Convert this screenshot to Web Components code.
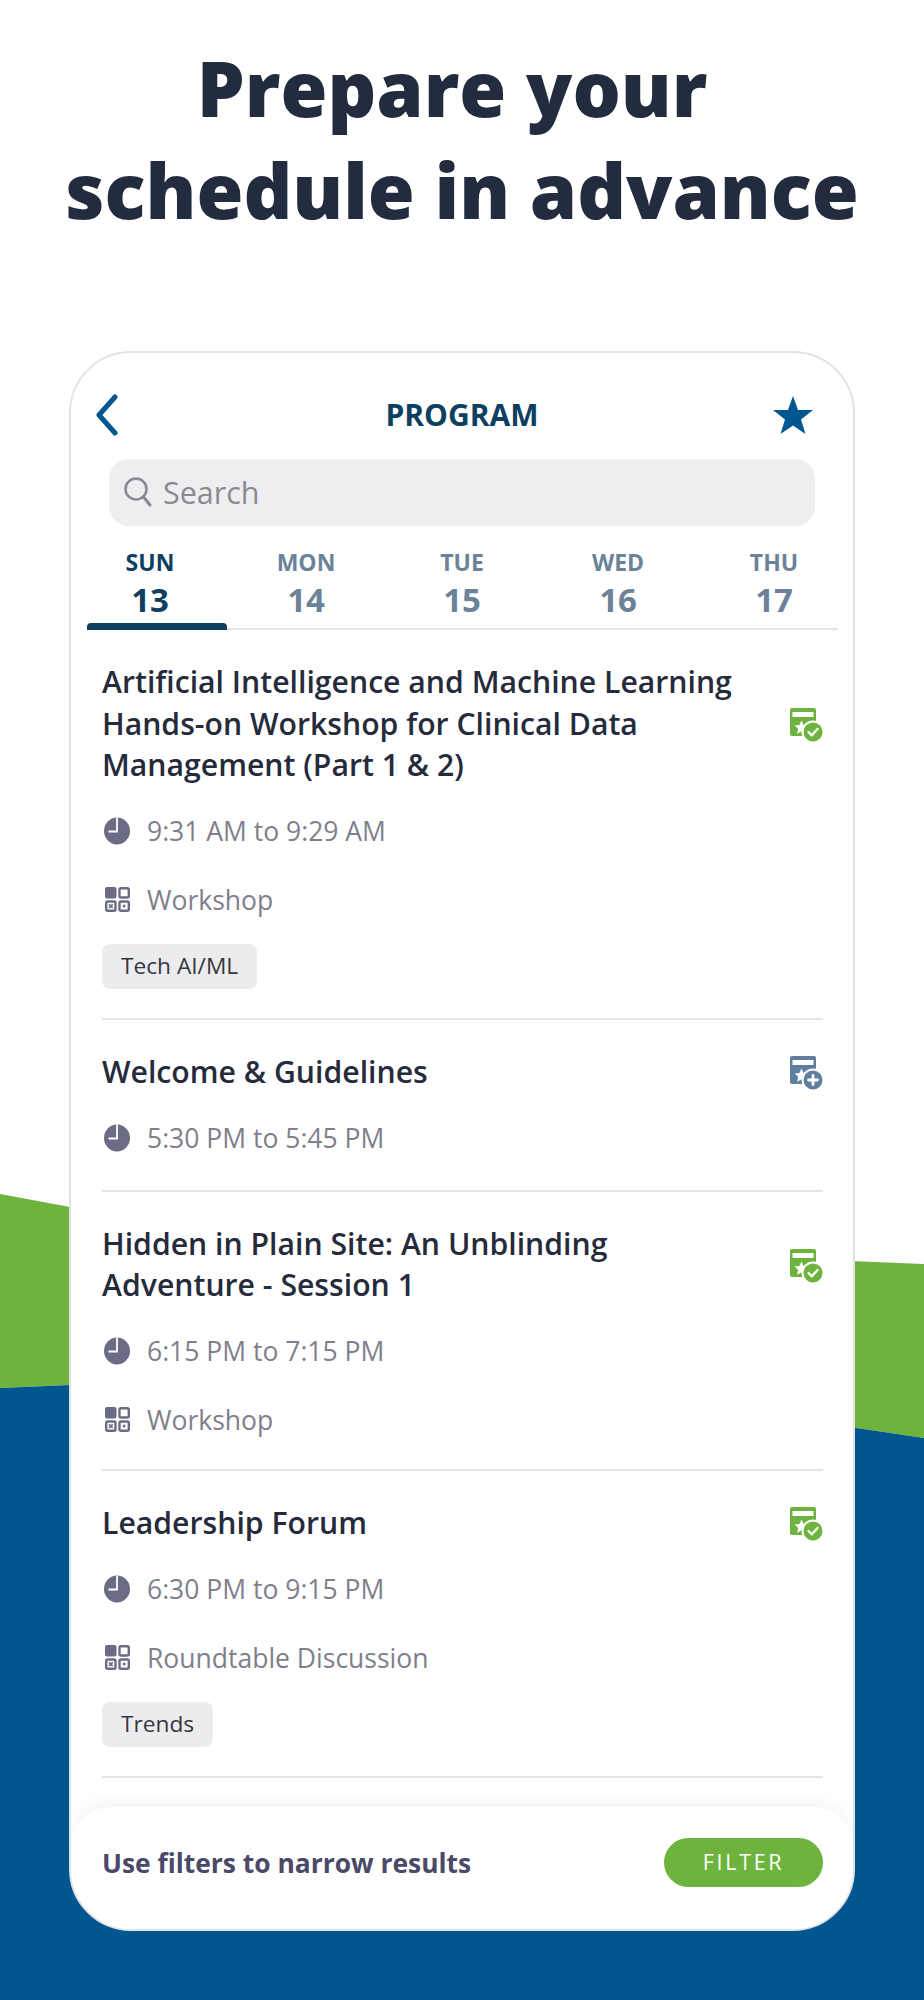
<!DOCTYPE html>
<html>
<head>
<meta charset="utf-8">
<title>Program</title>
<style>
  html, body { margin: 0; padding: 0; background: #fff; }
  body { font-family: "Open Sans", "Noto Sans", sans-serif; }
</style>
</head>
<body>
<promo-page>
  <span slot="headline">Prepare your&nbsp;<br>schedule in advance</span>
  <program-card>
    <program-nav>PROGRAM</program-nav>
    <search-box>Search</search-box>
    <day-tabs></day-tabs>
    <session-item time="9:31 AM to 9:29 AM" kind="Workshop" tag="Tech AI/ML" state="added">Artificial Intelligence and Machine Learning Hands-on Workshop for Clinical Data Management (Part 1 &amp; 2)</session-item>
    <session-item time="5:30 PM to 5:45 PM" state="open">Welcome &amp; Guidelines</session-item>
    <session-item time="6:15 PM to 7:15 PM" kind="Workshop" state="added">Hidden in Plain Site: An Unblinding Adventure - Session 1</session-item>
    <session-item time="6:30 PM to 9:15 PM" kind="Roundtable Discussion" tag="Trends" state="added">Leadership Forum</session-item>
    <filter-bar slot="footer">Use filters to narrow results</filter-bar>
  </program-card>
</promo-page>

<script>
  // shared little helper, every element does the same thing with its shadow root
  function shadow(el, html) {
    el.attachShadow({ mode: "open" });
    el.shadowRoot.innerHTML = html;
  }

  class PromoPage extends HTMLElement {
    constructor() {
      super();
      shadow(this, `
      <style>
        :host { display: block; position: relative; width: 924px; height: 2000px; overflow: hidden; background: #fff; }
        .backdrop { position: absolute; left: 0; top: 0; }
        h1 {
          position: relative; margin: 0; height: 351px; box-sizing: border-box; padding-top: 37px;
          text-align: center; font: 800 76px/102px "Open Sans", sans-serif; color: #232c3f;
        }
        .device { position: relative; margin: 0 69px; }
      </style>
      <svg class="backdrop" width="924" height="2000" viewBox="0 0 924 2000">
        <path fill="#6fb33f" d="M0 1194 L70 1207 V1385 L0 1388Z"/>
        <path fill="#6fb33f" d="M850 1261 L924 1264 V1438 L850 1427Z"/>
        <path fill="#00568f" d="M0 1388 L70 1385 H850 V1427 L924 1438 V2000 H0Z"/>
      </svg>
      <h1><slot name="headline"></slot></h1>
      <div class="device"><slot></slot></div>`);
    }
  }

  class ProgramCard extends HTMLElement {
    constructor() {
      super();
      shadow(this, `
      <style>
        :host {
          display: flex; flex-direction: column; box-sizing: border-box; width: 786px; height: 1580px;
          background: #fff; border: 2px solid #e3e3e5; border-radius: 62px; overflow: hidden;
        }
        .list { flex: 1; min-height: 0; overflow: hidden; }
      </style>
      <div class="list"><slot></slot></div>
      <slot name="footer"></slot>`);
    }
  }

  class ProgramNav extends HTMLElement {
    constructor() {
      super();
      shadow(this, `
      <style>
        :host {
          display: grid; grid-template-columns: 1fr auto 1fr; align-items: center; box-sizing: border-box;
          height: 78px; margin-top: 23px; padding: 0 23px;
        }
        .title { font: 700 30px/38px "Open Sans", sans-serif; color: #0e3f61; }
        .star { justify-self: end; margin-right: 17px; }
      </style>
      <svg width="26" height="42" viewBox="0 0 26 42">
        <path d="M21 3 L5 21 L21 39" fill="none" stroke="#00568f" stroke-width="5" stroke-linecap="round" stroke-linejoin="round"/>
      </svg>
      <span class="title"><slot></slot></span>
      <svg class="star" width="40" height="38" viewBox="0 0 40 38">
        <path fill="#00568f" d="M20 0 L25 14 L40 14 L28 23.5 L32.5 38 L20 29.5 L7.5 38 L12 23.5 L0 14 L15 14Z"/>
      </svg>`);
    }
  }

  class SearchBox extends HTMLElement {
    constructor() {
      super();
      shadow(this, `
      <style>
        :host {
          display: flex; align-items: center; gap: 10px; box-sizing: border-box;
          height: 67px; margin: 5px 38px 0 38px; padding: 0 14px 2px;
          background: #eeeef0; border-radius: 20px;
          font: 400 30.5px/40px "Open Sans", sans-serif; color: #8a8a90;
        }
      </style>
      <svg width="30" height="32" viewBox="0 0 30 32">
        <circle cx="13" cy="13" r="10.5" fill="none" stroke="#8a8a90" stroke-width="2.6"/>
        <path d="M20.5 21 L27 29" stroke="#8a8a90" stroke-width="3" stroke-linecap="round"/>
      </svg>
      <slot></slot>`);
    }
  }

  class DayTabs extends HTMLElement {
    constructor() {
      super();
      const days = [["SUN", 13], ["MON", 14], ["TUE", 15], ["WED", 16], ["THU", 17]];
      shadow(this, `
      <style>
        :host { display: block; margin: 21px 15px 0 16px; border-bottom: 2px solid #e4e4e6; }
        .row { display: grid; grid-template-columns: repeat(5, 156px); margin-left: -15px; }
        .day { position: relative; display: flex; flex-direction: column; align-items: center; height: 81px; color: #6b8299; }
        .on { color: #0e3f61; }
        .on::after { content: ""; position: absolute; left: 15px; right: 1px; bottom: -2px; height: 7px; background: #0e3f61; border-radius: 4px 4px 0 0; }
        .name { font: 700 23px/30px "Open Sans", sans-serif; }
        .num { font: 700 33px/40px "Open Sans", sans-serif; margin-top: 3px; }
      </style>
      <div class="row">
        ${days.map((d, i) => `<div class="day ${i == 0 ? "on" : ""}"><span class="name">${d[0]}</span><span class="num">${d[1]}</span></div>`).join("")}
      </div>`);
    }
  }

  class SessionItem extends HTMLElement {
    constructor() {
      super();
      const time = this.getAttribute("time");
      const kind = this.getAttribute("kind");
      const tag = this.getAttribute("tag");
      const added = this.getAttribute("state") == "added";
      const tone = added ? "#6fb33f" : "#5f7f9e";
      const mark = added
        ? `<path d="M18.5 24 L21.8 27.3 L27.5 21" fill="none" stroke="#fff" stroke-width="2.4" stroke-linecap="round" stroke-linejoin="round"/>`
        : `<path d="M23 19.5 V28.5 M18.5 24 H27.5" fill="none" stroke="#fff" stroke-width="2.8" stroke-linecap="round"/>`;
      const bottom = tag ? 29.5 : kind ? 31.5 : 34;
      shadow(this, `
      <style>
        :host { display: block; margin: 0 30px 0 31px; padding: 31px 0 ${bottom}px; border-bottom: 2px solid #e4e4e6; }
        .head { display: flex; align-items: center; justify-content: space-between; gap: 30px; }
        .head svg { flex: none; margin-top: 3px; }
        .title { flex: 1; font: 600 30.2px/41.5px "Open Sans", sans-serif; color: #262b3c; max-width: 650px; }
        .meta { display: flex; align-items: center; gap: 17px; height: 36px; margin-top: 33px; font: 400 26.5px/36px "Open Sans", sans-serif; color: #7f7f8c; }
        .head + .meta { margin-top: 27px; }
        .meta svg { margin-left: 2px; flex: none; }
        .tag { display: inline-flex; align-items: center; height: 45px; margin-top: 26px; padding: 0 19px; background: #ececee; border-radius: 8px; font: 400 22.7px/30px "Open Sans", sans-serif; color: #33373f; }
        .tags { display: block; }
      </style>
      <div class="head">
        <div class="title"><slot></slot></div>
        <svg width="33" height="34" viewBox="0 0 33 34">
          <path fill="${tone}" d="M2 0 H24 A2 2 0 0 1 26 2 V28 H2 A2 2 0 0 1 0 26 V2 A2 2 0 0 1 2 0Z"/>
          <rect x="2.5" y="4" width="21" height="5" fill="#fff"/>
          <path fill="#fff" d="M11.5 12.5 L13.6 17 L18.5 17.5 L14.8 20.8 L15.9 25.7 L11.5 23.2 L7.1 25.7 L8.2 20.8 L4.5 17.5 L9.4 17Z"/>
          <circle cx="23" cy="24" r="11.5" fill="#fff"/>
          <circle cx="23" cy="24" r="9.5" fill="${tone}"/>
          ${mark}
        </svg>
      </div>
      <div class="meta">
        <svg width="26" height="28" viewBox="0 0 26 28">
          <ellipse cx="13" cy="14" rx="13" ry="13.5" fill="#6b6b85"/>
          <path d="M13 .5 V14.5 H4.5" fill="none" stroke="#fff" stroke-width="1.8"/>
        </svg>
        <span>${time}</span>
      </div>
      ${kind ? `<div class="meta">
        <svg width="26" height="25" viewBox="0 0 26 25" >
          <rect x="1" y="0" width="11.5" height="11.5" rx="2" fill="#6b6b85"/>
          <rect x="15.5" y="1.2" width="9.3" height="9.3" rx="1.5" fill="none" stroke="#6b6b85" stroke-width="2.4"/>
          <rect x="2.2" y="14.5" width="9.3" height="9.3" rx="1.5" fill="none" stroke="#6b6b85" stroke-width="2.4"/>
          <path d="M5 17.3 L8.7 21 M8.7 17.3 L5 21" stroke="#6b6b85" stroke-width="1.7"/>
          <rect x="15.5" y="14.5" width="9.3" height="9.3" rx="1.5" fill="none" stroke="#6b6b85" stroke-width="2.4"/>
          <circle cx="20.1" cy="19.1" r="1.5" fill="#6b6b85"/>
        </svg>
        <span>${kind}</span>
      </div>` : ""}
      ${tag ? `<div class="tags"><span class="tag">${tag}</span></div>` : ""}`);
    }
  }

  class FilterBar extends HTMLElement {
    constructor() {
      super();
      shadow(this, `
      <style>
        :host {
          display: flex; align-items: center; justify-content: space-between; box-sizing: border-box;
          height: 122px; padding: 0 30px 12px 31px; background: #fff; border-radius: 40px 40px 0 0;
          box-shadow: 0 -8px 16px rgba(0,0,0,.035); position: relative;
        }
        .text { font: 700 26.4px/36px "Open Sans", sans-serif; color: #4a4a68; margin-top: 2px; }
        button {
          width: 159px; height: 49px; border: 0; padding: 0; border-radius: 25px; background: #6fb33f; color: #fff;
          font: 500 21.5px/30px "Open Sans", sans-serif; letter-spacing: 2.7px;
        }
      </style>
      <span class="text"><slot></slot></span>
      <button>FILTER</button>`);
    }
  }

  customElements.define("promo-page", PromoPage);
  customElements.define("program-card", ProgramCard);
  customElements.define("program-nav", ProgramNav);
  customElements.define("search-box", SearchBox);
  customElements.define("day-tabs", DayTabs);
  customElements.define("session-item", SessionItem);
  customElements.define("filter-bar", FilterBar);
</script>
</body>
</html>
